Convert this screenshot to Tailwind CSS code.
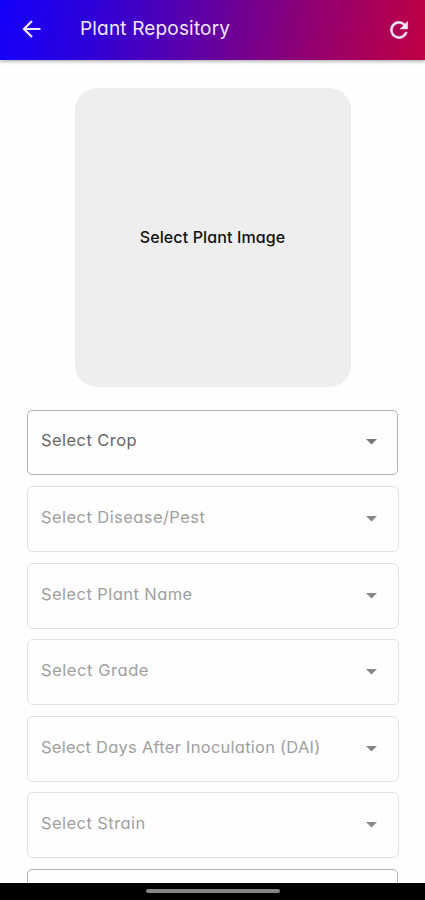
<!DOCTYPE html>
<html lang="en">
<head>
<meta charset="utf-8">
<meta name="viewport" content="width=device-width, initial-scale=1">
<title>Plant Repository</title>
<script src="https://cdn.jsdelivr.net/npm/@tailwindcss/browser@4"></script>
</head>
<body class="bg-[#fefefe]">
<div class="flex h-[900px] w-[425px] flex-col overflow-hidden font-[Inter,sans-serif] [font-feature-settings:'cv11']">
  <header class="relative z-10 flex h-[60px] shrink-0 items-center bg-[linear-gradient(98deg,#1400fa_0%,#2b00dc_20%,#6a0099_53%,#97006b_76%,#bf0044_100%)] pr-[13px] pl-[20px] text-[#f3e8ff] shadow-[0_1px_4px_rgba(0,0,0,0.4)]">
    <svg class="mt-[-2px] size-6 shrink-0" viewBox="0 0 24 24" fill="none" stroke="currentColor" stroke-width="2.2"><path d="M20.500 12H4.500M12 4L4 12l8 8"/></svg>
    <h1 class="mt-[-2px] ml-[36px] flex-1 text-[19px] leading-6 font-normal tracking-[0.17px] whitespace-nowrap">Plant Repository</h1>
    <svg class="mt-[-1px] size-[26px] shrink-0" viewBox="0 0 24 24" fill="currentColor" stroke="currentColor" stroke-width="0.4"><path d="M17.650 6.350A7.950 7.950 0 0 0 12 4a8 8 0 1 0 7.730 10h-2.080A6 6 0 1 1 12 6c1.660 0 3.140.690 4.220 1.780L13 11h7V4z"/></svg>
  </header>
  <main class="flex min-h-0 flex-1 flex-col overflow-hidden pt-[28px]">
    <div class="mx-auto flex h-[299px] w-[276px] shrink-0 items-center justify-center rounded-[22px] bg-[#eee] text-[16px] font-medium tracking-[0.12px] text-[#111]"><span class="mt-[-2px] whitespace-nowrap">Select Plant Image</span></div>
    <div class="mt-[22.5px] flex flex-col gap-[10.6px] pr-[26px] pl-[27px] text-[16.5px] tracking-[0.43px] text-[#a0a0a0]">
      <div class="mr-px mb-px flex h-[65px] shrink-0 items-center justify-between rounded-[5px] border border-[#b2b2b2] pr-[20px] pl-[13px] text-[#666]"><span class="mt-[-3px]">Select Crop</span><svg class="h-[6px] w-[11px] text-[#777]" viewBox="0 0 11 6" fill="currentColor"><path d="M0 0h11L5.500 5.500z"/></svg></div>
      <div class="flex h-[66px] shrink-0 items-center justify-between rounded-[6px] border border-[#e2e2e2] pr-[21px] pl-[13px]"><span class="mt-[-3px]">Select Disease/Pest</span><svg class="h-[6px] w-[11px] text-[#888]" viewBox="0 0 11 6" fill="currentColor"><path d="M0 0h11L5.500 5.500z"/></svg></div>
      <div class="flex h-[66px] shrink-0 items-center justify-between rounded-[6px] border border-[#e2e2e2] pr-[21px] pl-[13px]"><span class="mt-[-3px]">Select Plant Name</span><svg class="h-[6px] w-[11px] text-[#888]" viewBox="0 0 11 6" fill="currentColor"><path d="M0 0h11L5.500 5.500z"/></svg></div>
      <div class="flex h-[66px] shrink-0 items-center justify-between rounded-[6px] border border-[#e2e2e2] pr-[21px] pl-[13px]"><span class="mt-[-3px] tracking-[0.55px]">Select Grade</span><svg class="h-[6px] w-[11px] text-[#888]" viewBox="0 0 11 6" fill="currentColor"><path d="M0 0h11L5.500 5.500z"/></svg></div>
      <div class="flex h-[66px] shrink-0 items-center justify-between rounded-[6px] border border-[#e2e2e2] pr-[21px] pl-[13px]"><span class="mt-[-3px] tracking-[0.25px]">Select Days After Inoculation (DAI)</span><svg class="h-[6px] w-[11px] text-[#888]" viewBox="0 0 11 6" fill="currentColor"><path d="M0 0h11L5.500 5.500z"/></svg></div>
      <div class="flex h-[66px] shrink-0 items-center justify-between rounded-[6px] border border-[#e2e2e2] pr-[21px] pl-[13px]"><span class="mt-[-4px]">Select Strain</span><svg class="h-[6px] w-[11px] text-[#888]" viewBox="0 0 11 6" fill="currentColor"><path d="M0 0h11L5.500 5.500z"/></svg></div>
      <div class="mr-px h-[66px] shrink-0 rounded-[5px] border border-[#b2b2b2]"></div>
    </div>
  </main>
  <footer class="flex h-[17px] shrink-0 items-center justify-center bg-black"><div class="mt-[-1px] h-1 w-[134px] rounded-full bg-[#858585]"></div></footer>
</div>
</body>
</html>
